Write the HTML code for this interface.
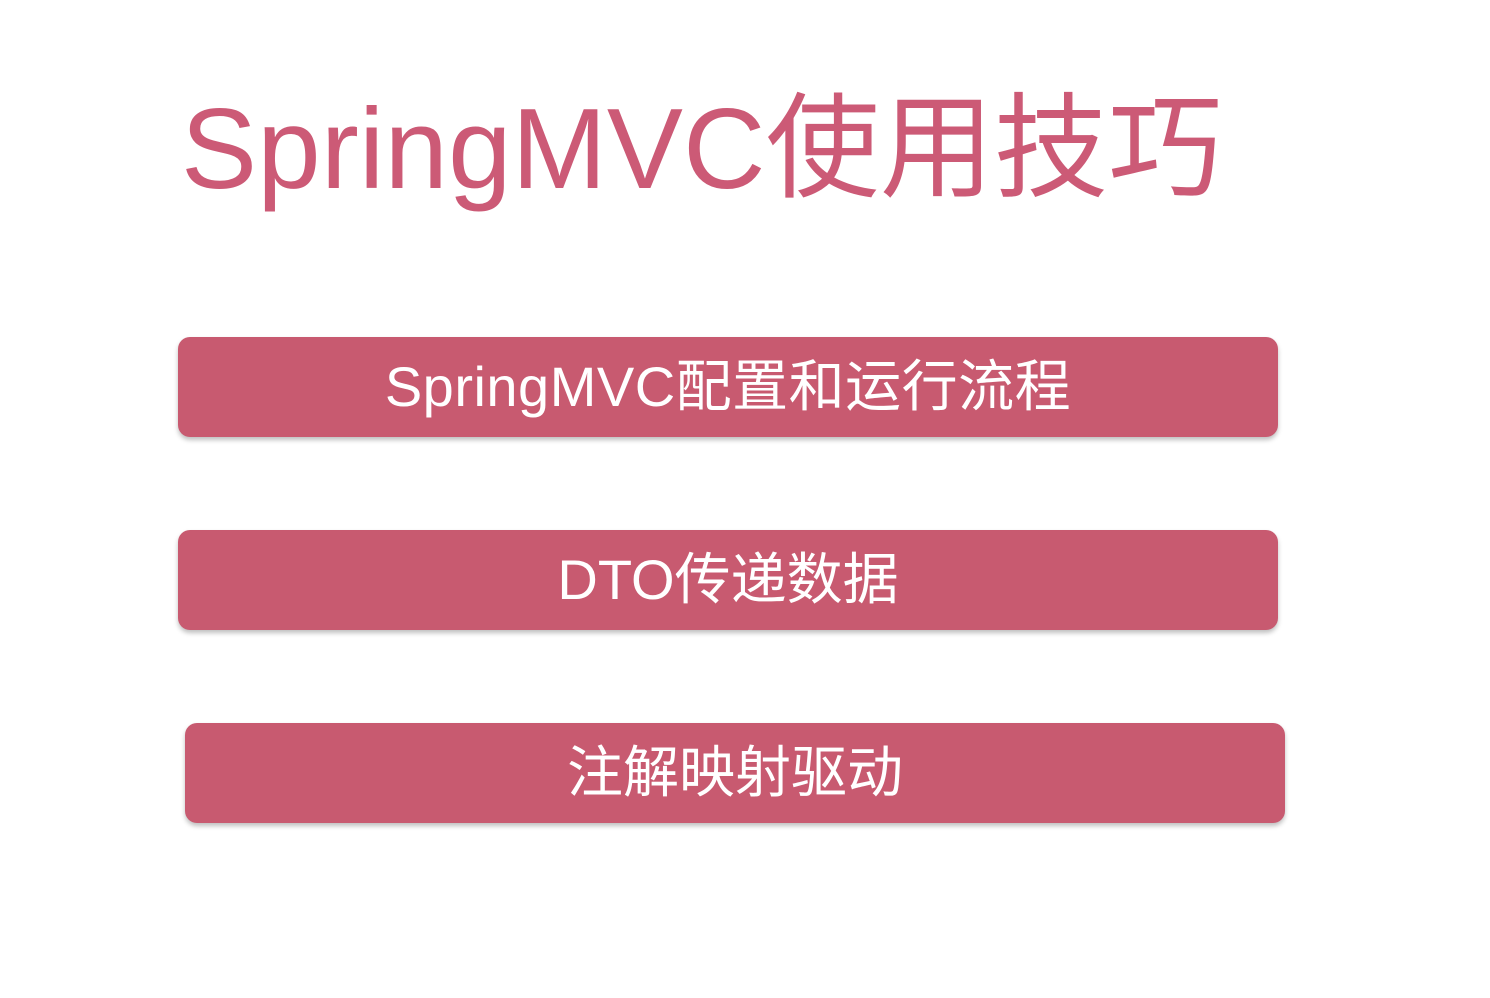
<!DOCTYPE html>
<html><head><meta charset="utf-8"><style>
body{margin:0;width:1490px;height:998px;background:#fff;position:relative;overflow:hidden;font-family:"Liberation Sans","Noto Sans CJK SC",sans-serif}
.t{position:absolute;left:181px;top:80px;font-size:114px;letter-spacing:0.2px;color:#cc5a76;white-space:nowrap;line-height:140px}
.b{position:absolute;width:1100px;height:100px;background:#c85a70;border-radius:12px;box-shadow:0 3px 5px rgba(0,0,0,.25);color:#fff;font-size:56px;line-height:100px;text-align:center;white-space:nowrap}
</style></head><body>
<div class="t">SpringMVC使用技巧</div>
<div class="b" style="left:178px;top:337px;letter-spacing:0.5px">SpringMVC配置和运行流程</div>
<div class="b" style="left:178px;top:530px">DTO传递数据</div>
<div class="b" style="left:185px;top:723px">注解映射驱动</div>
</body></html>
